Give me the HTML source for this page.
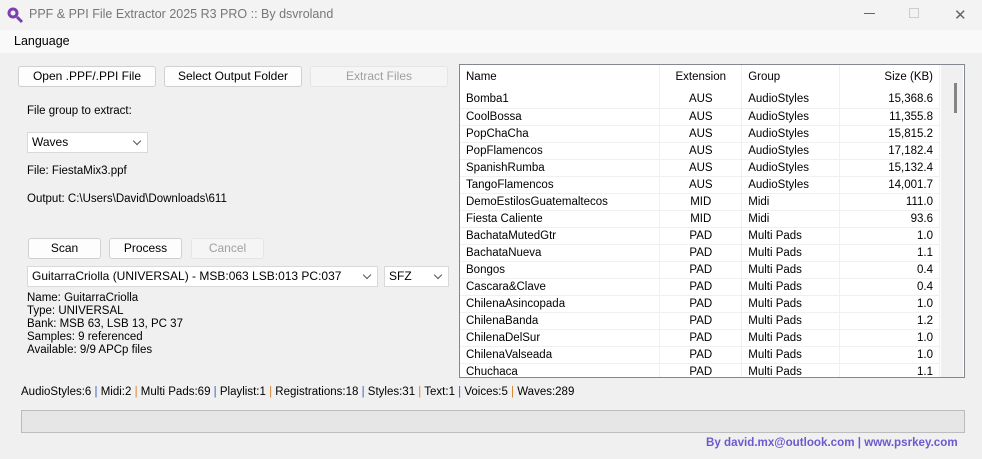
<!DOCTYPE html>
<html><head><meta charset="utf-8"><style>
*{margin:0;padding:0;box-sizing:border-box}
body{width:982px;height:459px;background:#f0f0f0;font-family:"Liberation Sans",sans-serif;font-size:11.5px;color:#000;position:relative;overflow:hidden}
.a{position:absolute;white-space:nowrap}
.btn{position:absolute;height:21px;background:#fdfdfd;border:1px solid #d0d0d0;border-radius:3px;text-align:center;line-height:19px;font-size:12px}
.dis{background:#f5f5f5;border-color:#e5e5e5;color:#a0a0a0}
.cb{position:absolute;height:21px;background:#fff;border:1px solid #d9d9d9;line-height:19px;padding-left:4px;font-size:12px}
.cb:after{content:"";position:absolute;right:7px;top:5px;width:5px;height:5px;border-right:1px solid #555;border-bottom:1px solid #555;transform:rotate(45deg)}
table{border-collapse:collapse;position:absolute;font-size:11.5px}
td{height:17px;padding:0 6px;border-bottom:1px solid #f0f0f0;border-right:1px solid #f0f0f0;white-space:nowrap}
tr.h td{height:26px;border-bottom:none;padding-bottom:2px}
.c{text-align:center}.r{text-align:right}
.sb{color:#3b5bbf}.so{color:#d9822b}
</style></head><body>
<div class="a" style="left:0;top:0;width:982px;height:30px;background:#f3f3f3"></div>
<svg class="a" style="left:6px;top:6px" width="18" height="18" viewBox="0 0 18 18"><circle cx="7" cy="7" r="5.5" fill="#7b3fb0"/><circle cx="7" cy="7" r="2.5" fill="#f3f3f3"/><path d="M11 11 L16 16" stroke="#7b3fb0" stroke-width="3"/></svg>
<div class="a" style="left:29px;top:7px;font-size:12.5px;color:#777">PPF &amp; PPI File Extractor 2025 R3 PRO :: By dsvroland</div>
<div class="a" style="left:864px;top:13px;width:11px;height:1px;background:#666"></div>
<div class="a" style="left:909px;top:8px;width:10px;height:10px;border:1px solid #ccc"></div>
<div class="a" style="left:954px;top:6px;font-size:15px;color:#666">✕</div>
<div class="a" style="left:0;top:30px;width:982px;height:23px;background:#f9f9f9"></div>
<div class="a" style="left:14px;top:34px;font-size:12.5px">Language</div>

<div class="btn" style="left:18px;top:66px;width:138px">Open .PPF/.PPI File</div>
<div class="btn" style="left:164px;top:66px;width:138px">Select Output Folder</div>
<div class="btn dis" style="left:310px;top:66px;width:138px">Extract Files</div>
<div class="a" style="left:27px;top:105px">File group to extract:</div>
<div class="cb" style="left:27px;top:132px;width:121px">Waves</div>
<div class="a" style="left:27px;top:165px">File: FiestaMix3.ppf</div>
<div class="a" style="left:27px;top:193px">Output: C:\Users\David\Downloads\611</div>
<div class="btn" style="left:28px;top:238px;width:73px">Scan</div>
<div class="btn" style="left:109px;top:238px;width:73px">Process</div>
<div class="btn dis" style="left:191px;top:238px;width:73px">Cancel</div>
<div class="cb" style="left:27px;top:266px;width:351px">GuitarraCriolla (UNIVERSAL) - MSB:063 LSB:013 PC:037</div>
<div class="cb" style="left:384px;top:266px;width:65px">SFZ</div>
<div class="a" style="left:27px;top:292px;line-height:13px">Name: GuitarraCriolla<br>Type: UNIVERSAL<br>Bank: MSB 63, LSB 13, PC 37<br>Samples: 9 referenced<br>Available: 9/9 APCp files</div>
<div class="a" style="left:21px;top:386px">AudioStyles:6 <span class="sb">|</span> Midi:2 <span class="so">|</span> Multi Pads:69 <span class="sb">|</span> Playlist:1 <span class="so">|</span> Registrations:18 <span class="sb">|</span> Styles:31 <span class="so">|</span> Text:1 <span class="sb">|</span> Voices:5 <span class="so">|</span> Waves:289</div>
<div class="a" style="left:21px;top:410px;width:944px;height:23px;background:#e6e6e6;border:1px solid #bcbcbc"></div>
<div class="a" style="left:706px;top:436px;font-weight:bold;color:#6a5acd;font-size:11.6px">By david.mx@outlook.com | www.psrkey.com</div>

<div class="a" style="left:459px;top:64px;width:506px;height:314px;background:#fff;border:1px solid #828790"></div>
<div class="a" style="left:941px;top:65px;width:22px;height:312px;background:#f0f0f0"></div>
<div class="a" style="left:954px;top:83px;width:3px;height:30px;background:#858585"></div>
<div class="a" style="left:460px;top:65px;width:480px;height:312px;overflow:hidden">
<table style="left:0;top:0;width:480px">
<colgroup><col style="width:200px"><col style="width:82px"><col style="width:98px"><col style="width:100px"></colgroup>
<tr class="h"><td>Name</td><td class="c">Extension</td><td>Group</td><td class="r">Size (KB)</td></tr>
<tr><td>Bomba1</td><td class="c">AUS</td><td>AudioStyles</td><td class="r">15,368.6</td></tr>
<tr><td>CoolBossa</td><td class="c">AUS</td><td>AudioStyles</td><td class="r">11,355.8</td></tr>
<tr><td>PopChaCha</td><td class="c">AUS</td><td>AudioStyles</td><td class="r">15,815.2</td></tr>
<tr><td>PopFlamencos</td><td class="c">AUS</td><td>AudioStyles</td><td class="r">17,182.4</td></tr>
<tr><td>SpanishRumba</td><td class="c">AUS</td><td>AudioStyles</td><td class="r">15,132.4</td></tr>
<tr><td>TangoFlamencos</td><td class="c">AUS</td><td>AudioStyles</td><td class="r">14,001.7</td></tr>
<tr><td>DemoEstilosGuatemaltecos</td><td class="c">MID</td><td>Midi</td><td class="r">111.0</td></tr>
<tr><td>Fiesta Caliente</td><td class="c">MID</td><td>Midi</td><td class="r">93.6</td></tr>
<tr><td>BachataMutedGtr</td><td class="c">PAD</td><td>Multi Pads</td><td class="r">1.0</td></tr>
<tr><td>BachataNueva</td><td class="c">PAD</td><td>Multi Pads</td><td class="r">1.1</td></tr>
<tr><td>Bongos</td><td class="c">PAD</td><td>Multi Pads</td><td class="r">0.4</td></tr>
<tr><td>Cascara&amp;Clave</td><td class="c">PAD</td><td>Multi Pads</td><td class="r">0.4</td></tr>
<tr><td>ChilenaAsincopada</td><td class="c">PAD</td><td>Multi Pads</td><td class="r">1.0</td></tr>
<tr><td>ChilenaBanda</td><td class="c">PAD</td><td>Multi Pads</td><td class="r">1.2</td></tr>
<tr><td>ChilenaDelSur</td><td class="c">PAD</td><td>Multi Pads</td><td class="r">1.0</td></tr>
<tr><td>ChilenaValseada</td><td class="c">PAD</td><td>Multi Pads</td><td class="r">1.0</td></tr>
<tr><td>Chuchaca</td><td class="c">PAD</td><td>Multi Pads</td><td class="r">1.1</td></tr>
</table></div>
</body></html>
